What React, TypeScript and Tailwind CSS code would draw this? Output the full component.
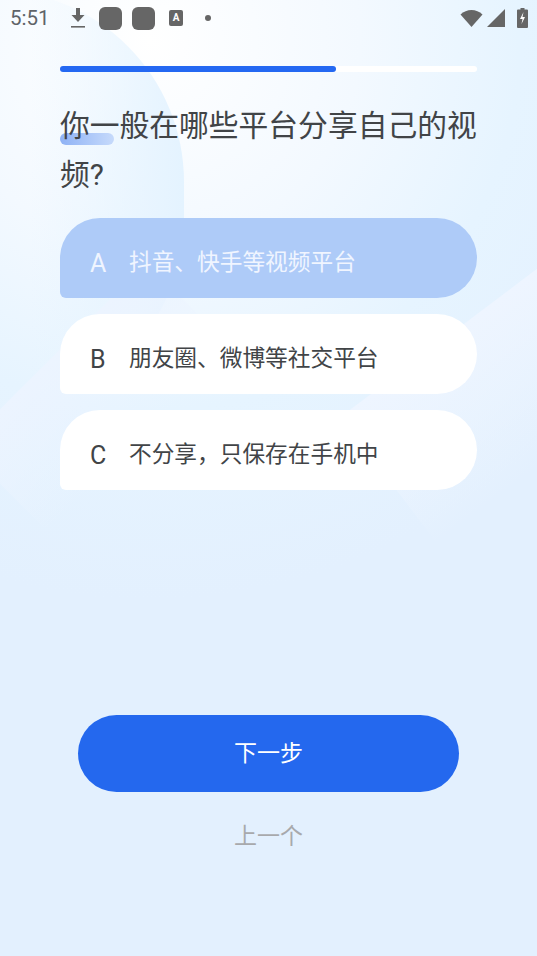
const fontStack = "font-['Roboto','Noto_Sans_CJK_SC',sans-serif]"

const options = [
  { key: 'A', label: '抖音、快手等视频平台', selected: true },
  { key: 'B', label: '朋友圈、微博等社交平台', selected: false },
  { key: 'C', label: '不分享，只保存在手机中', selected: false },
]

function StatusBar() {
  return (
    <div className="relative flex h-[36px] items-center pl-[10px] pr-[9px] text-[#5f6368]">
      <span className="w-[40px] text-[20.5px] leading-none">5:51</span>
      <svg width="16" height="22" viewBox="0 0 16 22" className="ml-[20px]">
        <path d="M6 1h4v7h4.500L8 15 1.500 8H6z" fill="#666" />
        <rect x="1" y="19" width="14" height="1.600" fill="#666" />
      </svg>
      <div className="ml-[13px] h-[23px] w-[23px] rounded-[6px] bg-[#666]" />
      <div className="ml-[10px] h-[23px] w-[23px] rounded-[6px] bg-[#666]" />
      <div className="ml-[14px] flex h-[16px] w-[14px] items-center justify-center rounded-[2px] bg-[#666] text-[10px] font-bold leading-none text-white">
        A
      </div>
      <div className="ml-[22px] h-[6px] w-[6px] rounded-full bg-[#666]" />
      <div className="ml-auto flex items-center gap-[3px]">
        <svg width="23" height="18" viewBox="0 0 23 18">
          <path d="M0.5 5.500C3.500 2.500 7.500 1 11.500 1s8 1.500 11 4.500L11.500 18z" fill="#666" />
        </svg>
        <svg width="18" height="18" viewBox="0 0 18 18" className="ml-[1px]">
          <path d="M18 0v18H0z" fill="#666" />
        </svg>
        <svg width="11" height="20" viewBox="0 0 11 20" className="ml-[9px]">
          <path d="M3.500 0h4v1.500H10a1 1 0 0 1 1 1V19a1 1 0 0 1-1 1H1a1 1 0 0 1-1-1V2.500a1 1 0 0 1 1-1h2.500z" fill="#666" />
          <path d="M6.500 4 3 11h2.500L4.500 16 8 9H5.500z" fill="#fff" />
        </svg>
      </div>
    </div>
  )
}

function Background() {
  return (
    <div className="absolute inset-0 overflow-hidden">
      <div className="absolute inset-0 bg-[radial-gradient(circle_at_150px_40px,#ffffff_0px,#f3f9ff_210px,#e6f4ff_370px,#e3f0fe_560px)]" />
      <div className="absolute left-[-200px] top-[-10px] h-[420px] w-[384px] rounded-full bg-gradient-to-r from-[#e3f2ff00] from-60% to-[#e4f3ff]" />
      <div className="absolute left-[349px] top-[280px] h-[160px] w-[400px] -rotate-[37deg] bg-gradient-to-b from-[#eef5ff] to-[#e3f0fe00]" />
      <div className="absolute left-[-33px] top-[337px] h-[120px] w-[260px] -rotate-45 bg-gradient-to-b from-[#ecf4ff] to-[#e3f0fe00]" />
    </div>
  )
}

export default function App() {
  return (
    <div className={`relative h-[956px] w-[537px] overflow-hidden bg-[#e3f0fe] ${fontStack}`}>
      <Background />
      <div className="relative flex h-full flex-col">
        <StatusBar />

        <div className="mx-[60px] mt-[30px] h-[6px] rounded-full bg-white">
          <div className="h-full w-[276px] rounded-full bg-[#2468f2]" />
        </div>

        <div className="relative mx-[60px] mt-[29px]">
          <div className="absolute left-0 top-[32px] h-[12px] w-[54px] rounded-[6px] bg-gradient-to-r from-[#8fb2f5] to-[#c6dafb]" />
          <h1 className="relative text-[29.78px] font-normal leading-[49px] text-[#414447]">
            你一般在哪些平台分享自己的视频?
          </h1>
        </div>

        <div className="mx-[60px] mt-[19px] flex flex-col gap-[16px]">
          {options.map((o) => (
            <div
              key={o.key}
              className={
                o.selected
                  ? 'flex h-[80px] items-center rounded-[40px] rounded-bl-[6px] bg-[#aecbf8] pl-[30px] pt-[10px] text-[#f0f5ff]'
                  : 'flex h-[80px] items-center rounded-[40px] rounded-bl-[6px] bg-white pl-[30px] pt-[10px] text-[#414447]'
              }
            >
              <span className="w-[39px] text-[25px] leading-none">{o.key}</span>
              <span className="text-[22.7px] leading-none">{o.label}</span>
            </div>
          ))}
        </div>

        <button className="mx-[78px] mt-[225px] h-[77px] rounded-[38.5px] bg-[#2468ee] pt-[2px] text-[23px] text-white">
          下一步
        </button>
        <div className="mt-[33px] text-center text-[23px] leading-none text-[#a8a9ac]">上一个</div>
      </div>
    </div>
  )
}
